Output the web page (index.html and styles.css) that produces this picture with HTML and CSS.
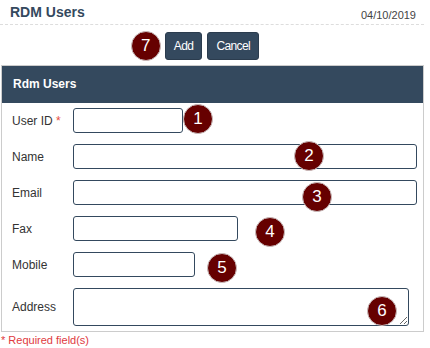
FILE: index.html
```html
<!DOCTYPE html>
<html lang="en">
<head>
  <meta charset="UTF-8">
  <title>RDM Users</title>
  <link rel="stylesheet" href="styles.css">
</head>
<body>
  <div class="page">
    <header class="page-header">
      <h2>RDM Users</h2>
      <span class="date">04/10/2019</span>
    </header>

    <!-- toolbar -->
    <div class="toolbar">
      <div class="btn-group">
        <span class="badge badge-7">7</span>
        <button class="btn">Add</button>
        <button class="btn">Cancel</button>
      </div>
    </div>

    <div class="panel">
      <div class="panel-heading">Rdm Users</div>
      <div class="panel-body">
        <div class="form-row">
          <label for="user-id">User ID <span class="req">*</span></label>
          <input type="text" id="user-id" class="w-id">
          <span class="badge badge-1">1</span>
        </div>
        <div class="form-row">
          <label for="name">Name</label>
          <input type="text" id="name" class="w-full">
          <span class="badge badge-2">2</span>
        </div>
        <div class="form-row">
          <label for="email">Email</label>
          <input type="text" id="email" class="w-full">
          <span class="badge badge-3">3</span>
        </div>
        <div class="form-row">
          <label for="fax">Fax</label>
          <input type="text" id="fax" class="w-fax">
          <span class="badge badge-4">4</span>
        </div>
        <div class="form-row">
          <label for="mobile">Mobile</label>
          <input type="text" id="mobile" class="w-mobile">
          <span class="badge badge-5">5</span>
        </div>
        <div class="form-row">
          <label for="address">Address</label>
          <textarea id="address" class="w-address"></textarea>
          <span class="badge badge-6">6</span>
        </div>
      </div>
    </div>

    <p class="required-note">* Required field(s)</p>
  </div>
</body>
</html>
```

FILE: styles.css
```css
* {
  box-sizing: border-box;
}

body {
  margin: 0;
  font-family: 'Liberation Sans', Arial, sans-serif;
  color: #333;
  background: #fff;
}

.page {
  width: 424px;
}

.page-header {
  display: flex;
  justify-content: space-between;
  height: 25px;
  padding: 0 8px 0 10px;
  border-bottom: 1px dashed #ddd;
}

.page-header h2 {
  margin: 0;
  font-size: 14px;
  line-height: 24px;
  color: #34495e;
}

.date {
  font-size: 11px;
  line-height: 24px;
  padding-top: 3px;
  color: #444;
}

.toolbar {
  display: flex;
  justify-content: center;
  padding: 7px 0 5px;
}

.btn-group {
  position: relative;
  display: flex;
  gap: 5px;
}

.btn {
  height: 28px;
  padding: 0 8px;
  font-family: 'Liberation Sans', Arial, sans-serif;
  font-size: 12px;
  letter-spacing: -0.6px;
  color: #fff;
  background-color: #34495e;
  border: 1px solid #2b3c4e;
  border-radius: 3px;
}

.panel {
  margin-left: 1px;
  border: 1px solid #ccc;
}

.panel-heading {
  height: 37px;
  padding-left: 11px;
  line-height: 37px;
  font-size: 12px;
  font-weight: bold;
  color: #fff;
  background-color: #34495e;
}

.panel-body {
  display: flex;
  flex-direction: column;
  gap: 11px;
  padding: 5px 5px 5px 10px;
}

.form-row {
  position: relative;
  display: flex;
  align-items: center;
}

.form-row label {
  width: 61px;
  flex-shrink: 0;
  font-size: 12px;
  color: #333;
}

.req {
  color: #e74c3c;
}

input, textarea {
  height: 25px;
  font-family: 'Liberation Sans', Arial, sans-serif;
  font-size: 12px;
  border: 1px solid #34495e;
  border-radius: 3px;
  background: #fff;
}

.w-id { width: 110px; }
.w-full { width: 344px; }
.w-fax { width: 165px; }
.w-mobile { width: 122px; }

.w-address {
  width: 336px;
  height: 38px;
  resize: both;
}

.required-note {
  margin: 2px 0 0 1px;
  font-size: 11px;
  color: #e0393e;
}

/* numbered callouts */
.badge {
  position: absolute;
  width: 30px;
  height: 30px;
  border: 1px solid #c9bcbc;
  border-radius: 50%;
  background-color: #660000;
  color: #fff;
  font-size: 17px;
  line-height: 28px;
  text-align: center;
}

.badge-7 { right: calc(100% + 4px); top: -1px; }
.badge-1 { left: 171px; top: -4px; }
.badge-2 { left: 282px; top: -3px; }
.badge-3 { left: 290px; top: 2px; }
.badge-4 { left: 243px; top: 1px; }
.badge-5 { left: 195px; top: 1px; }
.badge-6 { left: 355px; top: 8px; }
```
